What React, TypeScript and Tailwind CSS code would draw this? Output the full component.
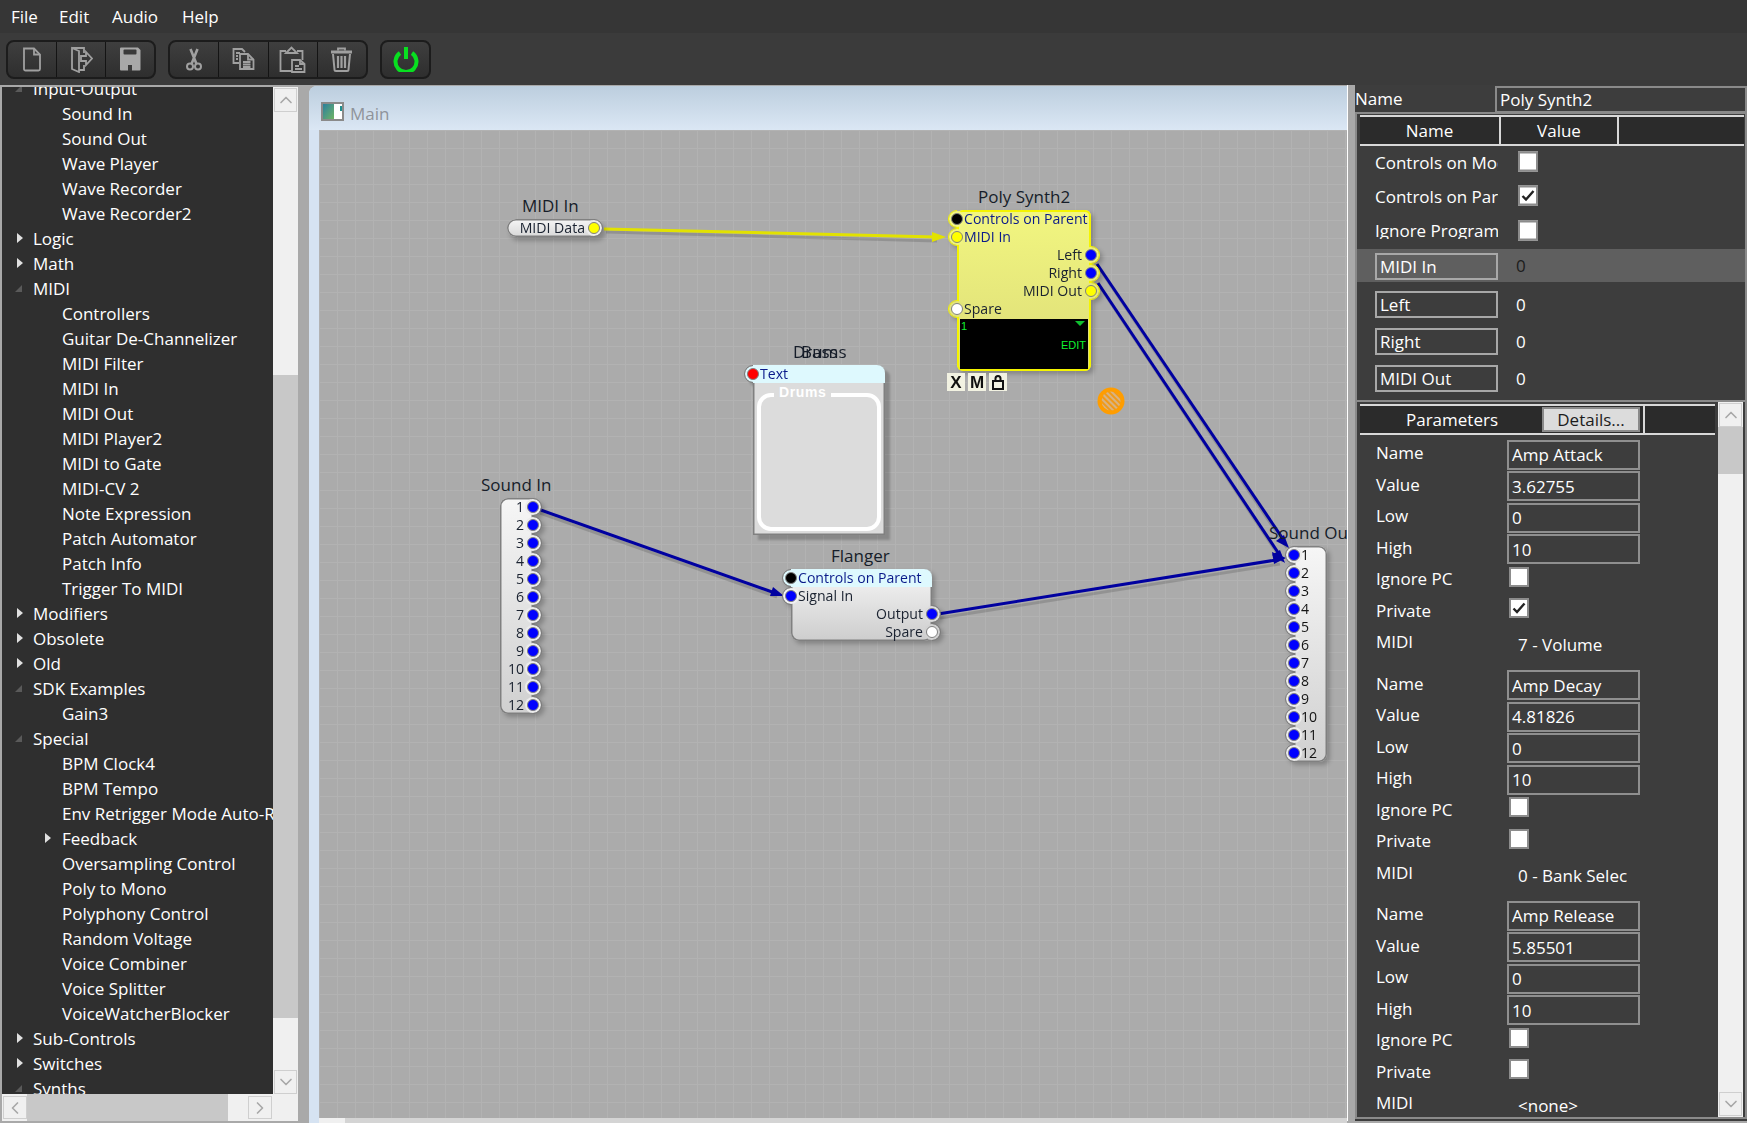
import { ChevronUp, ChevronDown, ChevronLeft, ChevronRight } from "lucide-react";

const treeRows: { label: string; depth: number; arrow?: "open" | "closed" }[] = [
  { label: "Input-Output", depth: 0, arrow: "open" },
  { label: "Sound In", depth: 1 },
  { label: "Sound Out", depth: 1 },
  { label: "Wave Player", depth: 1 },
  { label: "Wave Recorder", depth: 1 },
  { label: "Wave Recorder2", depth: 1 },
  { label: "Logic", depth: 0, arrow: "closed" },
  { label: "Math", depth: 0, arrow: "closed" },
  { label: "MIDI", depth: 0, arrow: "open" },
  { label: "Controllers", depth: 1 },
  { label: "Guitar De-Channelizer", depth: 1 },
  { label: "MIDI Filter", depth: 1 },
  { label: "MIDI In", depth: 1 },
  { label: "MIDI Out", depth: 1 },
  { label: "MIDI Player2", depth: 1 },
  { label: "MIDI to Gate", depth: 1 },
  { label: "MIDI-CV 2", depth: 1 },
  { label: "Note Expression", depth: 1 },
  { label: "Patch Automator", depth: 1 },
  { label: "Patch Info", depth: 1 },
  { label: "Trigger To MIDI", depth: 1 },
  { label: "Modifiers", depth: 0, arrow: "closed" },
  { label: "Obsolete", depth: 0, arrow: "closed" },
  { label: "Old", depth: 0, arrow: "closed" },
  { label: "SDK Examples", depth: 0, arrow: "open" },
  { label: "Gain3", depth: 1 },
  { label: "Special", depth: 0, arrow: "open" },
  { label: "BPM Clock4", depth: 1 },
  { label: "BPM Tempo", depth: 1 },
  { label: "Env Retrigger Mode Auto-Reset", depth: 1 },
  { label: "Feedback", depth: 1, arrow: "closed" },
  { label: "Oversampling Control", depth: 1 },
  { label: "Poly to Mono", depth: 1 },
  { label: "Polyphony Control", depth: 1 },
  { label: "Random Voltage", depth: 1 },
  { label: "Voice Combiner", depth: 1 },
  { label: "Voice Splitter", depth: 1 },
  { label: "VoiceWatcherBlocker", depth: 1 },
  { label: "Sub-Controls", depth: 0, arrow: "closed" },
  { label: "Switches", depth: 0, arrow: "closed" },
  { label: "Synths", depth: 0, arrow: "open" },
];

const params = [
  { name: "Amp Attack", value: "3.62755", ignore: false, priv: true, midi: "7 - Volume" },
  { name: "Amp Decay", value: "4.81826", ignore: false, priv: false, midi: "0 - Bank Selec" },
  { name: "Amp Release", value: "5.85501", ignore: false, priv: false, midi: "<none>" },
];

const PIN_COLORS: Record<string, string> = {
  blue: "bg-[#0000ff]",
  yellow: "bg-[#ffff00]",
  white: "bg-[#ffffff]",
  black: "bg-[#000000]",
  red: "bg-[#ff0000]",
};

// round connector over the node's edge; only the outer half of the outline is drawn
function Pin({ side, color, fill = "bg-[#ececec]", ring = "border-[#7a7a7a]" }: { side: "left" | "right"; color: string; fill?: string; ring?: string }) {
  const pos = side === "left" ? "-left-[9px] [clip-path:inset(0_50%_0_0)]" : "-right-[9px] [clip-path:inset(0_0_0_50%)]";
  const dotPos = side === "left" ? "-left-[6px]" : "-right-[6px]";
  const patchPos = side === "left" ? "-left-[8px]" : "-right-[8px]";
  return (
    <>
      <span className={`absolute ${patchPos} top-[1px] z-10 h-[16px] w-[16px] rounded-full ${fill}`} />
      <span className={`absolute ${pos} top-0 z-10 h-[18px] w-[18px] rounded-full border-[1.5px] ${ring}`} />
      <span className={`absolute ${dotPos} top-[3px] z-20 h-[12px] w-[12px] rounded-full border-[1.5px] border-[#808080] ${PIN_COLORS[color]}`} />
    </>
  );
}

function PinRow({ label, side, color, fill, ring, tone = "text-[#1a2230]", bg = "" }: { label: string; side: "left" | "right"; color: string; fill?: string; ring?: string; tone?: string; bg?: string }) {
  return (
    <div className={`relative flex h-[18px] items-center whitespace-nowrap text-[14.1px] leading-none ${tone} ${bg} ${side === "left" ? "pl-[7px]" : "justify-end pr-[9px]"}`}>
      <Pin side={side} color={color} fill={fill} ring={ring} />
      <span className="relative z-20">{label}</span>
    </div>
  );
}

function NodeTitle({ children, className }: { children: string; className: string }) {
  return <div className={`absolute whitespace-nowrap text-[17px] leading-none text-[#161d29] ${className}`}>{children}</div>;
}

function CheckBox({ checked, className = "" }: { checked?: boolean; className?: string }) {
  return (
    <div className={`flex items-center justify-center border-2 border-[#8c8c8c] bg-white ${className}`}>
      {checked && (
        <svg viewBox="0 0 14 12" className="h-[12px] w-[14px]">
          <path d="M1.5 6.5 5 10 12.5 1.5" fill="none" stroke="#222" strokeWidth="2.4" />
        </svg>
      )}
    </div>
  );
}

function ScrollButton({ children, className = "" }: { children: React.ReactNode; className?: string }) {
  return <div className={`flex shrink-0 items-center justify-center border border-[#cfcfcf] bg-[#f0f0f0] text-[#a8a8a8] ${className}`}>{children}</div>;
}

function ToolButton({ children, last }: { children: React.ReactNode; last?: boolean }) {
  return <div className={`flex h-full flex-1 items-center justify-center ${last ? "" : "border-r border-[#141414]"}`}>{children}</div>;
}

const ic = { fill: "none", stroke: "#a0a0a0", strokeWidth: 1.8 };

function Icons() {
  return (
    <div className="flex h-[52px] items-center bg-[#3b3b3b] pl-[6px]">
      <div className="flex h-[39px] w-[150px] items-center rounded-[8px] border-2 border-[#1c1c1c] bg-gradient-to-b from-[#3f3f3f] to-[#2e2e2e]">
        <ToolButton>
          <svg viewBox="0 0 20 25" className="h-[25px] w-[20px]" {...ic}>
            <path d="M2 1.5h10l6 6V22a1.5 1.5 0 0 1-1.5 1.5h-13A1.5 1.5 0 0 1 2 22z" />
            <path d="M12 1.5V7.5h6" />
          </svg>
        </ToolButton>
        <ToolButton>
          <svg viewBox="0 0 23 27" className="h-[27px] w-[23px]" {...ic}>
            <path d="M2 2h12v5M14 19v5H9" />
            <path d="M2 2l7 3v21l-7-3z" />
            <path d="M11 10h5V6l6 6.5-6 6.5v-4h-5z" />
          </svg>
        </ToolButton>
        <ToolButton last>
          <svg viewBox="0 0 22 24" className="h-[24px] w-[22px]">
            <path d="M1 1.5A1 1 0 0 1 2 .5h17l2.5 2.5v19.5a1 1 0 0 1-1 1H2a1 1 0 0 1-1-1z" fill="#a8a8a8" />
            <rect x="4.5" y="2.5" width="13" height="5" rx="1" fill="#3a3a3a" />
            <rect x="9" y="18" width="4" height="6" fill="#3a3a3a" />
          </svg>
        </ToolButton>
      </div>
      <div className="ml-[12px] flex h-[39px] w-[200px] items-center rounded-[8px] border-2 border-[#1c1c1c] bg-gradient-to-b from-[#3f3f3f] to-[#2e2e2e]">
        <ToolButton>
          <svg viewBox="0 0 16 23" className="h-[23px] w-[16px]" {...ic}>
            <circle cx="4" cy="18.5" r="3" strokeWidth="2" />
            <circle cx="12" cy="18.5" r="3" strokeWidth="2" />
            <path d="M5.5 16 11.5 1M10.5 16 4.5 1" strokeWidth="2.6" />
          </svg>
        </ToolButton>
        <ToolButton>
          <svg viewBox="0 0 23 22" className="h-[22px] w-[23px]" {...ic}>
            <path d="M7 15H1.5V1H10l3 3" />
            <path d="M8 6h8l5.5 5.5V21H8z" />
            <path d="M16 6v5.5h5.5M11 14h7.5M11 16.5h7.5M11 19h7.5M4 5h4M4 8h2M4 11h2" />
          </svg>
        </ToolButton>
        <ToolButton>
          <svg viewBox="0 0 27 27" className="h-[27px] w-[27px]" {...ic}>
            <path d="M7 5H1.5v20H13M18 5h5.5v9" />
            <path d="M7 7l5.5-5.5L18 7z" />
            <path d="M13 14h8l4.5 4v8H13z" />
            <path d="M21 14v4h4.5M16 20h4M16 23h7" />
          </svg>
        </ToolButton>
        <ToolButton last>
          <svg viewBox="0 0 23 25" className="h-[25px] w-[23px]" {...ic}>
            <path d="M1 5h21" strokeWidth="3" />
            <path d="M8 3.5V1.5h7v2" />
            <path d="M3 7l1.5 15.5a1.5 1.5 0 0 0 1.5 1.5h11a1.5 1.5 0 0 0 1.5-1.5L20 7" strokeWidth="2" />
            <path d="M8 9v12M11.5 9v12M15 9v12" strokeWidth="2.2" />
          </svg>
        </ToolButton>
      </div>
      <div className="ml-[12px] flex h-[39px] w-[51px] items-center justify-center rounded-[8px] border-2 border-[#1c1c1c] bg-gradient-to-b from-[#3f3f3f] to-[#2e2e2e]">
        <svg viewBox="0 0 26 25" className="h-[25px] w-[26px]" fill="none" stroke="#08e020" strokeWidth="4">
          <path d="M7 6a10.5 10.5 0 1 0 12 0" />
          <path d="M13 0v12" />
        </svg>
      </div>
    </div>
  );
}

function Tree() {
  return (
    <div className="flex h-full w-[298px] shrink-0 flex-col border-t-2 border-l-2 border-[#a9a9a9] bg-[#f0f0f0]">
      <div className="flex min-h-0 flex-1">
        <div className="h-full w-[271px] overflow-hidden bg-[#2f2f2f]">
          <div className="-mt-[11px]">
            {treeRows.map((r) => (
              <div key={r.label} className={`relative flex h-[25px] items-center whitespace-nowrap text-[17px] leading-none text-white ${r.depth ? "pl-[60px]" : "pl-[31px]"}`}>
                {r.arrow === "closed" && (
                  <span className={`absolute top-[7px] h-0 w-0 border-y-[5.5px] border-l-[6px] border-y-transparent border-l-[#e0e0e0] ${r.depth ? "left-[43px]" : "left-[15px]"}`} />
                )}
                {r.arrow === "open" && <span className="absolute left-[13px] top-[9px] h-0 w-0 border-b-[7px] border-l-[7px] border-b-[#5a5a5a] border-l-transparent" />}
                {r.label}
              </div>
            ))}
          </div>
        </div>
        <div className="flex w-[25px] flex-col px-px pt-px">
          <ScrollButton className="h-[24px]"><ChevronUp size={20} /></ScrollButton>
          <div className="h-[263px]" />
          <div className="h-[643px] -mx-px bg-[#c8c8c8]" />
          <div className="flex-1" />
          <ScrollButton className="h-[24px]"><ChevronDown size={20} /></ScrollButton>
        </div>
      </div>
      <div className="flex h-[27px] shrink-0 items-center px-px">
        <ScrollButton className="h-[23px] w-[24px]"><ChevronLeft size={20} /></ScrollButton>
        <div className="h-full w-[201px] bg-[#c8c8c8]" />
        <div className="flex-1" />
        <ScrollButton className="mr-[25px] h-[23px] w-[24px]"><ChevronRight size={20} /></ScrollButton>
      </div>
    </div>
  );
}

function Canvas() {
  return (
    <div className="relative isolate min-h-0 flex-1 overflow-hidden bg-[#ababab] bg-[linear-gradient(to_right,#b2b2b2_1px,transparent_1px),linear-gradient(to_bottom,#b2b2b2_1px,transparent_1px)] bg-[size:18px_18px]">
      {/* wires, in page coordinates */}
      <svg viewBox="319 130 1028 988" className="absolute inset-0 h-full w-full">
        <defs>
          <pattern id="hatch" width="4" height="4" patternUnits="userSpaceOnUse" patternTransform="rotate(-45)">
            <rect width="4" height="4" fill="#f09a1a" />
            <rect width="2" height="4" fill="#d8b383" />
          </pattern>
        </defs>
        <g stroke="#000" strokeOpacity="0.14" strokeWidth="3" fill="none" transform="translate(2 4)">
          <path d="M604 228 935 237" />
          <path d="M538 509 775 593" />
          <path d="M938 614 1278 560" />
          <path d="M1097 264 1285 544" />
          <path d="M1098 283 1281 558" />
        </g>
        <path d="M604 229 936 237" stroke="#e2e200" strokeWidth="3" fill="none" />
        <polygon points="946,237 932,232 932,242" fill="#e2e200" />
        <g stroke="#0000a0" strokeWidth="3" fill="none">
          <path d="M538 509 775 593" />
          <path d="M938 614 1276 560" />
          <path d="M1097 264 1285 542" />
          <path d="M1098 283 1281 557" />
        </g>
        <g fill="#0000a0">
          <polygon points="784,596 770,596 773,587" />
          <polygon points="1286,558 1272,552 1274,564" />
          <polygon points="1289,548 1276,541 1284,535" />
          <polygon points="1285,563 1272,555 1280,550" />
        </g>
        <circle cx="1111" cy="401" r="13.5" fill="#ff9d00" />
        <circle cx="1111" cy="401" r="9.5" fill="url(#hatch)" />
      </svg>

      {/* MIDI In */}
      <NodeTitle className="left-[203px] top-[67px]">MIDI In</NodeTitle>
      <div className="absolute left-[188px] top-[89px] isolate h-[18px] w-[87px] rounded-l-full bg-gradient-to-b from-[#f6f6f6] to-[#d8d8d8] shadow-[inset_0_0_0_1.5px_#808080] drop-shadow-[3px_4px_2px_rgba(0,0,0,0.22)]">
        <PinRow label="MIDI Data" side="right" color="yellow" />
      </div>

      {/* Poly Synth2 */}
      <NodeTitle className="left-[659px] top-[58px]">Poly Synth2</NodeTitle>
      <div className="absolute left-[638px] top-[80px] isolate h-[161px] w-[134px] rounded-[6px] bg-gradient-to-b from-[#f2f680] to-[#dcdc78] shadow-[inset_0_0_0_2px_#f4f400] drop-shadow-[3px_3px_2px_rgba(0,0,0,0.22)]">
        <PinRow label="Controls on Parent" side="left" color="black" fill="bg-[#f2f680]" ring="border-[#f4f400]" tone="text-[#0a1a8a]" />
        <PinRow label="MIDI In" side="left" color="yellow" fill="bg-[#f0f480]" ring="border-[#f4f400]" tone="text-[#0a1a8a]" />
        <PinRow label="Left" side="right" color="blue" fill="bg-[#eef07e]" ring="border-[#f4f400]" />
        <PinRow label="Right" side="right" color="blue" fill="bg-[#eaec7c]" ring="border-[#f4f400]" />
        <PinRow label="MIDI Out" side="right" color="yellow" fill="bg-[#e6e87a]" ring="border-[#f4f400]" />
        <PinRow label="Spare" side="left" color="white" fill="bg-[#e2e47a]" ring="border-[#f4f400]" />
        <div className="relative mx-[3px] mt-px h-[50px] bg-black font-['Liberation_Sans',sans-serif] text-[11px] leading-none text-[#10f030]">
          <span className="absolute left-[1px] top-[2px]">1</span>
          <span className="absolute right-[3px] top-[2px] h-0 w-0 border-x-[5px] border-t-[5px] border-x-transparent border-t-[#10c030]" />
          <span className="absolute right-[2px] top-[21px]">EDIT</span>
        </div>
      </div>
      <div className="absolute left-[628px] top-[243px] flex gap-[3px]">
        {["X", "M"].map((t) => (
          <div key={t} className="flex h-[18px] w-[18px] items-center justify-center bg-[#f2f2e2] font-['Liberation_Sans',sans-serif] text-[17px] font-bold leading-none text-[#111]">{t}</div>
        ))}
        <div className="flex h-[18px] w-[18px] items-center justify-center bg-[#f2f2e2]">
          <svg viewBox="0 0 12 15" className="h-[15px] w-[12px]" fill="none" stroke="#111" strokeWidth="2">
            <path d="M3.5 6V3.5a2.5 2.5 0 0 1 5 0V6" />
            <rect x="1" y="6" width="10" height="8" />
          </svg>
        </div>
      </div>

      {/* Drums and Bass sit on the same spot */}
      <NodeTitle className="left-[474px] top-[213px]">Drums</NodeTitle>
      <NodeTitle className="left-[482px] top-[213px]">Bass</NodeTitle>
      <div className="absolute left-[434px] top-[235px] isolate h-[170px] w-[132px] rounded-tr-[8px] bg-[#dcdcdc] shadow-[inset_0_0_0_1.5px_#808080] drop-shadow-[5px_5px_1px_rgba(0,0,0,0.2)]">
        <PinRow label="Text" side="left" color="red" fill="bg-[#def9fe]" tone="text-[#0a1a8a]" bg="rounded-tr-[8px] bg-[#def9fe]" />
        <div className="relative">
          <div className="absolute left-[4px] top-[10px] h-[138px] w-[124px] rounded-[14px] border-4 border-white" />
          <div className="absolute left-[21px] top-0 bg-[#dcdcdc] px-[5px] font-['Liberation_Sans',sans-serif] text-[14px] font-bold leading-[18px] tracking-[0.6px] text-white">Drums</div>
        </div>
      </div>

      {/* Flanger */}
      <NodeTitle className="left-[512px] top-[417px]">Flanger</NodeTitle>
      <div className="absolute left-[472px] top-[439px] isolate h-[72px] w-[141px] rounded-[8px] bg-gradient-to-b from-[#f6f6f6] to-[#cdcdcd] shadow-[inset_0_0_0_1.5px_#808080] drop-shadow-[3px_3px_2px_rgba(0,0,0,0.22)]">
        <PinRow label="Controls on Parent" side="left" color="black" fill="bg-[#def9fe]" tone="text-[#0a1a8a]" bg="rounded-tr-[8px] bg-[#def9fe]" />
        <PinRow label="Signal In" side="left" color="blue" fill="bg-[#f2f2f2]" />
        <PinRow label="Output" side="right" color="blue" fill="bg-[#dcdcdc]" />
        <PinRow label="Spare" side="right" color="white" fill="bg-[#d2d2d2]" />
      </div>

      {/* Sound In */}
      <NodeTitle className="left-[162px] top-[346px]">Sound In</NodeTitle>
      <div className="absolute left-[181px] top-[368px] isolate h-[216px] w-[33px] rounded-l-[8px] bg-gradient-to-b from-[#f6f6f6] to-[#d0d0d0] shadow-[inset_0_0_0_1.5px_#808080] drop-shadow-[3px_3px_2px_rgba(0,0,0,0.22)]">
        {Array.from({ length: 12 }, (_, i) => (
          <PinRow key={i} label={String(i + 1)} side="right" color="blue" />
        ))}
      </div>

      {/* Sound Out runs past the canvas edge */}
      <NodeTitle className="left-[950px] top-[394px]">Sound Out</NodeTitle>
      <div className="absolute left-[975px] top-[416px] isolate h-[216px] w-[33px] rounded-r-[8px] bg-gradient-to-b from-[#f6f6f6] to-[#d0d0d0] shadow-[inset_0_0_0_1.5px_#808080] drop-shadow-[3px_3px_2px_rgba(0,0,0,0.22)]">
        {Array.from({ length: 12 }, (_, i) => (
          <PinRow key={i} label={String(i + 1)} side="left" color="blue" tone="text-[#141414]" />
        ))}
      </div>
    </div>
  );
}

function Window() {
  return (
    <div className="-mb-[2px] flex h-[1037px] w-[1038px] shrink-0 flex-col self-end rounded-tl-[8px] bg-[#d6e3f2]">
      <div className="flex h-[44px] shrink-0 items-center rounded-tl-[8px] bg-gradient-to-b from-[#bccede] to-[#dbe7f4] pl-[12px] pt-[6px]">
        <div className="flex h-[19px] w-[23px] border-2 border-[#8a8a8a] bg-white">
          <div className="h-full w-[11px] bg-gradient-to-br from-[#2b7f9a] to-[#6fb35f]" />
          <div className="ml-[6px] mt-[2px] h-[5px] w-[2px] bg-[#1f8f8f]" />
        </div>
        <span className="ml-[6px] translate-y-[2px] text-[17px] leading-none text-[#8f939a]">Main</span>
      </div>
      <div className="flex min-h-0 flex-1 pl-[10px]">
        <Canvas />
      </div>
      <div className="ml-[10px] flex h-[5px] shrink-0 bg-[#f0f0f0]">
        <div className="ml-[26px] h-full flex-1 bg-[#d4d4d4]" />
      </div>
    </div>
  );
}

function PortRow({ label, selected }: { label: string; selected?: boolean }) {
  return (
    <div className={`flex items-center pl-[18px] ${selected ? "h-[33px] bg-[#5f5f5f] text-[#1c1c1c]" : "h-[37px]"}`}>
      <div className={`flex h-[27px] w-[123px] items-center border-2 border-[#a8a8a8] pl-[3px] text-white ${selected ? "translate-y-px" : ""}`}>{label}</div>
      <span className="ml-[18px]">0</span>
    </div>
  );
}

function CheckRow({ label, checked, tall }: { label: string; checked?: boolean; tall?: boolean }) {
  return (
    <div className={`flex items-center pl-[18px] ${tall ? "h-[35px]" : "h-[34px]"}`}>
      <div className="w-[123px] -translate-y-px overflow-hidden whitespace-nowrap">{label}</div>
      <CheckBox checked={checked} className="ml-[20px] h-[20px] w-[20px] -translate-y-[1.5px]" />
    </div>
  );
}

function ParamGroup({ p }: { p: (typeof params)[number] }) {
  const inputs = [
    ["Name", p.name],
    ["Value", p.value],
    ["Low", "0"],
    ["High", "10"],
  ];
  return (
    <div className="mb-[10px]">
      {inputs.map(([label, value]) => (
        <div key={label} className="flex h-[31.5px] items-center pl-[19px]">
          <span className="w-[131px]">{label}</span>
          <div className="flex h-[30px] w-[133px] translate-y-[2px] items-center border-2 border-[#8f8f8f] pl-[3px]">{value}</div>
        </div>
      ))}
      <div className="flex h-[31.5px] items-center pl-[19px]">
        <span className="w-[131px]">Ignore PC</span>
        <CheckBox checked={p.ignore} className="ml-[2px] h-[20px] w-[20px] -translate-y-[2px]" />
      </div>
      <div className="flex h-[31.5px] items-center pl-[19px]">
        <span className="w-[131px]">Private</span>
        <CheckBox checked={p.priv} className="ml-[2px] h-[20px] w-[20px] -translate-y-[2px]" />
      </div>
      <div className="flex h-[31.5px] items-center pl-[19px]">
        <span className="w-[131px]">MIDI</span>
        <span className="ml-[11px] translate-y-[3px] whitespace-nowrap">{p.midi}</span>
      </div>
    </div>
  );
}

function Inspector() {
  return (
    <div className="flex min-w-0 flex-1 flex-col overflow-hidden bg-[#3d3d3d] pt-px text-[17px] leading-none text-white">
      <div className="flex h-[26px] shrink-0 items-center">
        <span className="w-[140px] -translate-y-px">Name</span>
        <div className="flex h-[27px] flex-1 items-center border-2 border-[#8a8a8a] pl-[3px]">Poly Synth2</div>
      </div>
      <div className="h-[288px] shrink-0 border-x-2 border-t-2 border-[#8a8a8a] pt-[1px]">
        <div className="ml-[3px] mr-[1px] flex h-[31px] border-y-2 border-[#d8d8d8] bg-[#2b2b2b]">
          <div className="flex w-[141px] items-center justify-center border-r-2 border-[#d8d8d8]">Name</div>
          <div className="flex w-[118px] items-center justify-center border-r-2 border-[#d8d8d8]">Value</div>
        </div>
        <CheckRow label="Controls on Module" />
        <CheckRow label="Controls on Parent" checked />
        <CheckRow label="Ignore Program Change" tall />
        <PortRow label="MIDI In" selected />
        <div className="h-[4px]" />
        <PortRow label="Left" />
        <PortRow label="Right" />
        <PortRow label="MIDI Out" />
      </div>
      <div className="flex min-h-0 flex-1 border-x-2 border-y-2 border-[#8a8a8a] pr-[2px]">
        <div className="min-w-0 flex-1">
          <div className="ml-[3px] mt-[2px] flex h-[31px] w-[355px] items-center border-y-2 border-[#d8d8d8] bg-[#2b2b2b]">
            <div className="flex w-[182px] translate-x-px items-center justify-center">Parameters</div>
            <div className="flex h-[25px] w-[98px] items-center justify-center border-2 border-[#8a8a8a] bg-[#dcdcdc] text-[#1c1c1c]">Details...</div>
            <div className="ml-[3px] h-full w-[2px] bg-[#d8d8d8]" />
          </div>
          <div className="pt-[2px]">
            {params.map((p) => (
              <ParamGroup key={p.name} p={p} />
            ))}
          </div>
        </div>
        <div className="flex w-[25px] shrink-0 flex-col bg-[#f0f0f0] px-px pt-px pb-px">
          <ScrollButton className="h-[24px]"><ChevronUp size={20} /></ScrollButton>
          <div className="h-[47px] -mx-px bg-[#c8c8c8]" />
          <div className="flex-1" />
          <ScrollButton className="h-[24px]"><ChevronDown size={20} /></ScrollButton>
        </div>
      </div>
      <div className="h-[2px] shrink-0 bg-[#3d3d3d]" />
    </div>
  );
}

export default function App() {
  return (
    <div className="flex h-[1123px] w-[1747px] flex-col overflow-hidden bg-[#3a3a3a] font-['Open_Sans',sans-serif]">
      <div className="flex h-[33px] shrink-0 items-center bg-[#363636] pl-[11px] text-[17px] leading-none text-white">
        <span className="w-[48px]">File</span>
        <span className="w-[53px]">Edit</span>
        <span className="w-[70px]">Audio</span>
        <span>Help</span>
      </div>
      <Icons />
      <div className="flex min-h-0 flex-1 bg-[#a9a9a9] pb-[2px]">
        <Tree />
        <div className="w-[11px] shrink-0" />
        <Window />
        <div className="w-[8px] shrink-0 border-l border-white" />
        <Inspector />
      </div>
    </div>
  );
}
